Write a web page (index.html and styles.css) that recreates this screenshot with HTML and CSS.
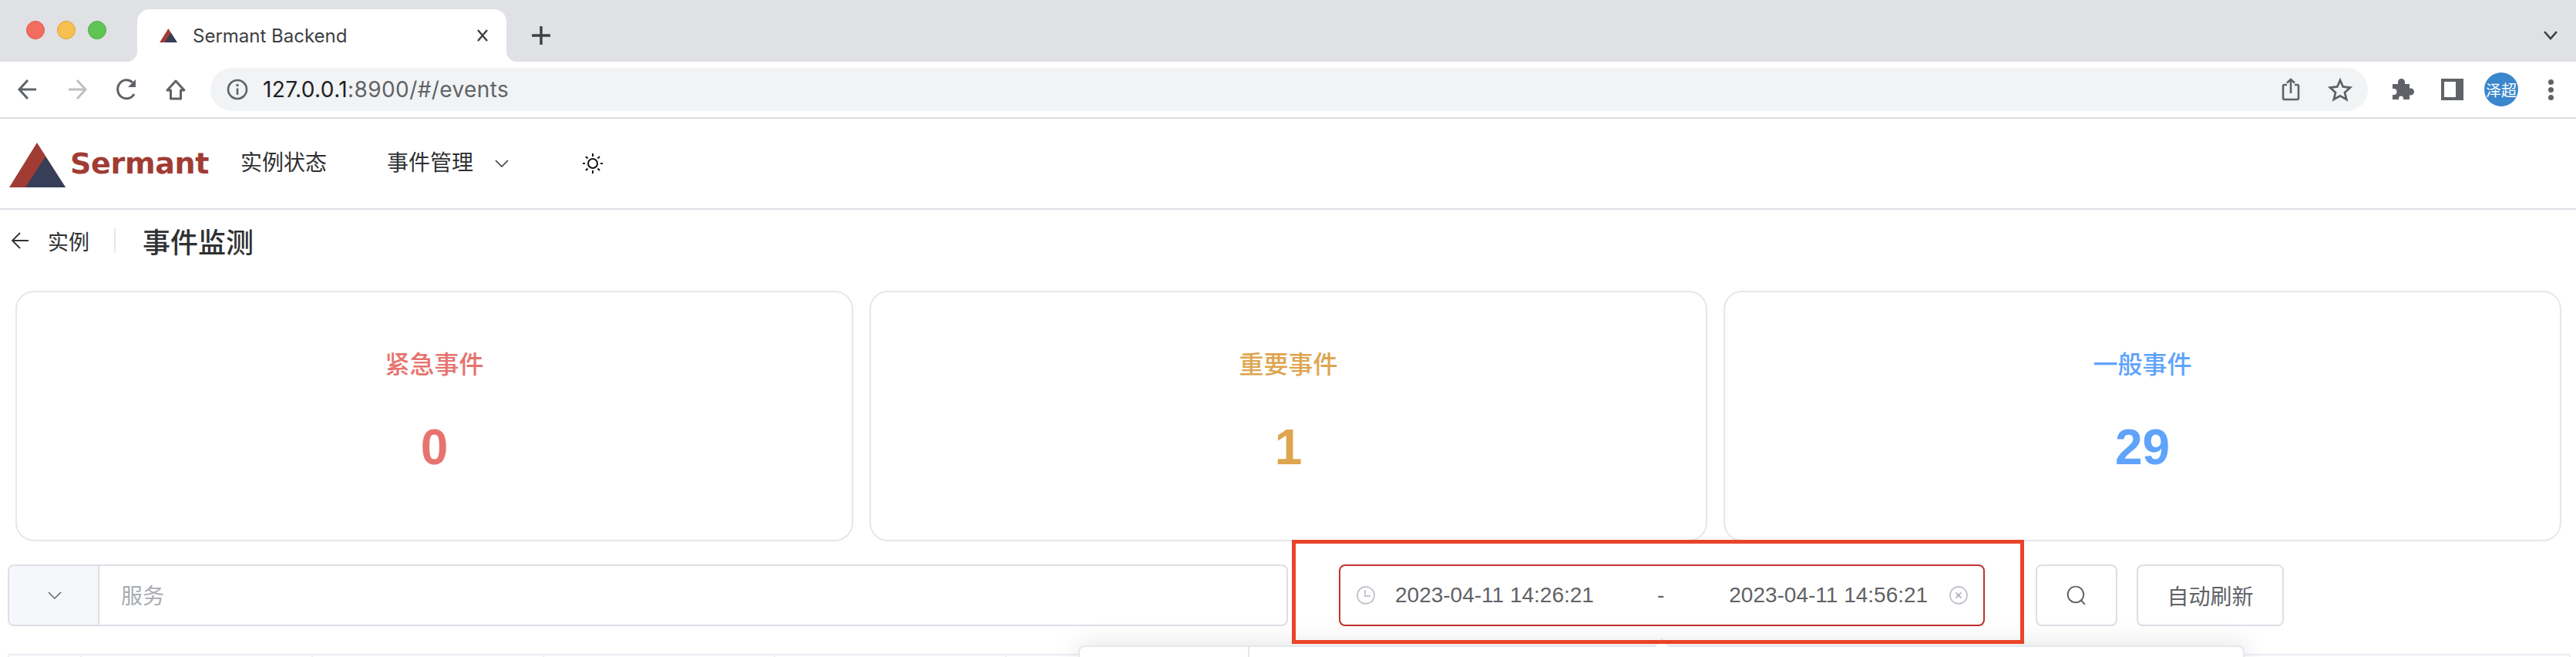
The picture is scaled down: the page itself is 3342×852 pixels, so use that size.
FILE: index.html
```html
<!DOCTYPE html>
<html lang="en">
<head>
    <meta charset="UTF-8">
    <meta name="viewport" content="width=device-width, initial-scale=1.0">
    <title>Sermant Backend</title>
    <link rel="stylesheet" href="styles.css">
</head>
<body>
    <!-- Browser window chrome -->
    <div class="tabstrip">
        <div class="lights">
            <span class="light light-red"></span>
            <span class="light light-yellow"></span>
            <span class="light light-green"></span>
        </div>
        <div class="tab">
            <svg class="favicon" viewBox="0 0 73 58"><polygon points="36,0 0,58 73,58" fill="#a03c34"/><polygon points="47,18 73,58 21,58" fill="#363f57"/></svg>
            <span class="tab-title">Sermant Backend</span>
            <svg class="tab-close" viewBox="0 0 20 20"><path d="M4 3 L16 17 M16 3 L4 17" stroke="#3c4043" stroke-width="2.4" fill="none"/></svg>
        </div>
        <svg class="tab-new" viewBox="0 0 24 24"><path d="M12 1 V23 M1 12 H23" stroke="#3c4043" stroke-width="3.4" stroke-linecap="round" fill="none"/></svg>
        <svg class="tab-search" viewBox="0 0 20 14"><path d="M2 2 L10 11 L18 2" stroke="#3c4043" stroke-width="2.6" fill="none"/></svg>
    </div>

    <div class="toolbar">
        <div class="tool-group">
            <svg class="tool-icon" viewBox="0 0 40 40"><path d="M31 20 H11 M20 8 L9 20 L20 32" stroke="#5f6368" stroke-width="3" fill="none"/></svg>
            <svg class="tool-icon" viewBox="0 0 40 40"><path d="M9 20 H29 M20 8 L31 20 L20 32" stroke="#bdc1c6" stroke-width="3" fill="none"/></svg>
            <svg class="tool-icon" viewBox="0 0 40 40"><path d="M30 26 A11.5 12 0 1 1 28 11" stroke="#5f6368" stroke-width="3" fill="none"/><polygon points="32,7 32,17 22,17" fill="#5f6368"/></svg>
            <svg class="tool-icon" viewBox="0 0 40 40"><path d="M20 9 L31 21 H26.500 V32 H13.500 V21 H9 Z" stroke="#5f6368" stroke-width="3" stroke-linejoin="round" fill="none"/></svg>
        </div>
        <div class="omnibox">
            <svg class="info-icon" viewBox="0 0 28 28"><circle cx="14" cy="14" r="12" stroke="#5f6368" stroke-width="2.600" fill="none"/><path d="M14 12.500 V21" stroke="#5f6368" stroke-width="2.600"/><circle cx="14" cy="8.500" r="1.700" fill="#5f6368"/></svg>
            <span class="url"><span class="url-host">127.0.0.1</span>:8900/#/events</span>
            <div class="omni-actions">
                <svg class="tool-icon" viewBox="0 0 40 40"><path d="M15 14 H11.500 Q10 14 10 15.500 V31 Q10 33 12 33 H28 Q30 33 30 31 V15.500 Q30 14 28.500 14 H25 M20 25 V7 M15 11.500 L20 7 L25 11.500" stroke="#5f6368" stroke-width="2.600" fill="none"/></svg>
                <svg class="tool-icon" viewBox="0 0 40 40"><polygon points="20,8 23.700,16.500 33,17.500 26,24 28.200,33 20,28.300 11.800,33 14,24 7,17.500 16.300,16.500" stroke="#5f6368" stroke-width="2.800" fill="none"/></svg>
            </div>
        </div>
        <div class="tool-group tool-group-right">
            <svg class="tool-icon" viewBox="0 0 40 40"><path d="M7 13 H14 V10.500 A4.500 4.500 0 0 1 23 10.500 V13 H29 V18.500 H30.500 A4.500 4.500 0 0 1 30.500 27.500 H29 V33 H21 V31.500 A3 3 0 0 0 15 31.500 V33 H7 V27 H8.500 A4 4 0 0 0 8.500 19 H7 Z" fill="#5f6368"/></svg>
            <div class="tool-cell"><span class="side-panel"></span></div>
            <div class="tool-cell"><span class="avatar">泽超</span></div>
            <div class="tool-cell"><span class="menu-dots"><i></i><i></i><i></i></span></div>
        </div>
    </div>

    <!-- App header -->
    <header class="app-nav">
        <svg class="logo-mark" viewBox="0 0 73 58"><polygon points="36,0 0,58 73,58" fill="#a03c34"/><polygon points="47,18 73,58 21,58" fill="#363f57"/></svg>
        <span class="logo-text">Sermant</span>
        <a class="nav-item nav-first">实例状态</a>
        <a class="nav-item nav-second">事件管理</a>
        <svg class="chevron nav-chevron" viewBox="0 0 20 12"><path d="M2 2 L10 10 L18 2" stroke="#303133" stroke-width="1.500" fill="none"/></svg>
        <svg class="sun" viewBox="0 0 28 28"><circle cx="14" cy="14" r="6" stroke="#111" stroke-width="2" fill="none"/><path d="M14 1 V5 M14 23 V27 M1 14 H4 M24 14 H27 M5 5 L7.500 7.500 M20.500 20.500 L23 23 M23 5 L20.500 7.500 M7.500 20.500 L5 23" stroke="#111" stroke-width="2" fill="none"/></svg>
    </header>

    <div class="page-head">
        <svg class="back-arrow" viewBox="0 0 24 24"><path d="M23 12 H2 M12 2 L2 12 L12 22" stroke="#303133" stroke-width="1.800" fill="none"/></svg>
        <span class="back-label">实例</span>
        <span class="head-divider"></span>
        <h1 class="head-title">事件监测</h1>
    </div>

    <div class="cards">
        <div class="card card-danger">
            <div class="card-label">紧急事件</div>
            <div class="card-value">0</div>
        </div>
        <div class="card card-warning">
            <div class="card-label">重要事件</div>
            <div class="card-value">1</div>
        </div>
        <div class="card card-info">
            <div class="card-label">一般事件</div>
            <div class="card-value">29</div>
        </div>
    </div>

    <div class="filters">
        <div class="input-group">
            <div class="input-prepend">
                <svg class="chevron" viewBox="0 0 20 12"><path d="M2 2 L10 10 L18 2" stroke="#606266" stroke-width="1.500" fill="none"/></svg>
            </div>
            <div class="input-field">服务</div>
        </div>
        <div class="date-range">
            <svg class="range-icon" viewBox="0 0 24 24"><circle cx="12" cy="12" r="11" stroke="#c0c4cc" stroke-width="1.800" fill="none"/><path d="M11 5 V13 H18" stroke="#c0c4cc" stroke-width="1.800" fill="none"/></svg>
            <span class="range-start">2023-04-11 14:26:21</span>
            <span class="range-sep">-</span>
            <span class="range-end">2023-04-11 14:56:21</span>
            <svg class="range-icon range-clear" viewBox="0 0 24 24"><circle cx="12" cy="12" r="11" stroke="#c0c4cc" stroke-width="1.800" fill="none"/><path d="M8.500 8.500 L15.500 15.500 M15.500 8.500 L8.500 15.500" stroke="#a8abb2" stroke-width="1.600" fill="none"/></svg>
        </div>
        <button class="btn btn-search" type="button">
            <svg class="search-icon" viewBox="0 0 24 24"><circle cx="11" cy="11" r="9.500" stroke="#606266" stroke-width="1.800" fill="none"/><path d="M17.500 18 L22 23" stroke="#606266" stroke-width="1.800" fill="none"/></svg>
        </button>
        <button class="btn btn-refresh" type="button">自动刷新</button>
    </div>

    <div class="table-head">
        <div class="col col-first"></div>
        <div class="col"></div>
        <div class="col"></div>
        <div class="col"></div>
        <div class="col"></div>
        <div class="col col-last"></div>
    </div>

    <!-- Date picker opens over the table -->
    <div class="picker">
        <div class="picker-sidebar"></div>
    </div>
    <div class="picker-arrow"></div>

    <!-- Red box drawn over the screenshot -->
    <div class="highlight"></div>
</body>
</html>
```

FILE: styles.css
```css
html, body {
    margin: 0;
    height: 852px;
    overflow: hidden;
    background: #fff;
}
body {
    position: relative;
    font-family: "Liberation Sans", "Noto Sans CJK SC", sans-serif;
    color: #303133;
}

/* browser chrome */
.tabstrip {
    display: flex;
    height: 80px;
    padding-left: 34px;
    background: #dfe1e5;
}
.lights {
    display: flex;
    gap: 16px;
    width: 144px;
    margin-top: 27px;
}
.light {
    width: 24px;
    height: 24px;
    border-radius: 50%;
    box-sizing: border-box;
}
.light-red {
    background: #f36c60;
    border: 1px solid #e0574c;
}
.light-yellow {
    background: #f6bf4f;
    border: 1px solid #dfa336;
}
.light-green {
    background: #5fc454;
    border: 1px solid #4dae43;
}
.tab {
    position: relative;
    display: flex;
    align-items: center;
    width: 479px;
    height: 68px;
    margin-top: 12px;
    padding-left: 29px;
    box-sizing: border-box;
    background: #fff;
    border-radius: 16px 16px 0 0;
}
.tab::before,
.tab::after {
    content: "";
    position: absolute;
    bottom: 0;
    width: 14px;
    height: 14px;
}
.tab::before {
    left: -14px;
    background: radial-gradient(circle at 0 0, #dfe1e5 14px, #fff 14.500px);
}
.tab::after {
    right: -14px;
    background: radial-gradient(circle at 100% 0, #dfe1e5 14px, #fff 14.500px);
}
.favicon {
    width: 23px;
    height: 18px;
}
.tab-title {
    margin-left: 20px;
    font-family: Inter, sans-serif;
    font-size: 24px;
    color: #3c4043;
    white-space: nowrap;
}
.tab-close {
    width: 20px;
    height: 20px;
    margin-left: auto;
    margin-right: 21px;
}
.tab-new {
    width: 24px;
    height: 24px;
    margin-top: 34px;
    margin-left: 33px;
}
.tab-search {
    width: 20px;
    height: 14px;
    margin-top: 39px;
    margin-left: auto;
    margin-right: 23px;
}
.toolbar {
    display: flex;
    align-items: center;
    height: 72px;
    background: #fff;
    border-bottom: 2px solid #dcdcdc;
}
.tool-group {
    display: flex;
    align-items: center;
    gap: 24px;
    padding-left: 16px;
}
.tool-group-right {
    padding-left: 25px;
    padding-right: 13px;
}
.tool-icon {
    width: 40px;
    height: 40px;
    flex: none;
}
.tool-cell {
    display: flex;
    align-items: center;
    justify-content: center;
    width: 40px;
    height: 44px;
}
.omnibox {
    display: flex;
    align-items: center;
    flex: 1;
    height: 56px;
    margin-left: 25px;
    padding: 0 16px 0 21px;
    background: #f1f3f4;
    border-radius: 28px;
}
.info-icon {
    width: 28px;
    height: 28px;
}
.url {
    margin-left: 19px;
    font-family: Inter, sans-serif;
    font-size: 28px;
    letter-spacing: 0.400px;
    color: #5f6368;
}
.url-host {
    color: #202124;
}
.omni-actions {
    display: flex;
    gap: 24px;
    margin-left: auto;
}
.side-panel {
    display: block;
    width: 29px;
    height: 28px;
    box-sizing: border-box;
    border: solid #5f6368;
    border-width: 4px 10px 4px 4px;
    background: #fff;
}
.avatar {
    display: flex;
    align-items: center;
    justify-content: center;
    flex: none;
    width: 44px;
    height: 44px;
    border-radius: 50%;
    background: #3b87cd;
    color: #fff;
    font-size: 20px;
    white-space: nowrap;
}
.menu-dots {
    display: flex;
    flex-direction: column;
    gap: 3px;
}
.menu-dots i {
    display: block;
    width: 7px;
    height: 7px;
    border-radius: 50%;
    background: #5f6368;
}

/* app header */
.app-nav {
    display: flex;
    align-items: center;
    height: 116px;
    padding-left: 12px;
    border-bottom: 2px solid #dcdfe6;
}
.logo-mark {
    width: 73px;
    height: 58px;
    margin-top: 4px;
}
.logo-text {
    width: 179px;
    margin-left: 6px;
    font-family: "DejaVu Sans", sans-serif;
    font-size: 38px;
    font-weight: bold;
    color: #a03c34;
    letter-spacing: -0.300px;
    white-space: nowrap;
}
.nav-item {
    font-size: 28px;
    line-height: 40px;
    color: #303133;
}
.nav-first {
    margin-left: 42px;
}
.nav-second {
    margin-left: 78px;
}
.chevron {
    width: 20px;
    height: 12px;
}
.nav-chevron {
    margin-left: 27px;
}
.sun {
    width: 28px;
    height: 28px;
    margin-left: 94px;
}

/* page head */
.page-head {
    display: flex;
    align-items: center;
    height: 80px;
    padding-left: 14px;
}
.back-arrow {
    width: 24px;
    height: 24px;
}
.back-label {
    margin-left: 24px;
    font-size: 27px;
}
.head-divider {
    width: 2px;
    height: 32px;
    margin-left: 32px;
    background: #e4e7ed;
}
.head-title {
    margin: 0 0 0 35px;
    font-size: 36px;
    font-weight: 500;
    color: #303133;
}

/* summary cards */
.cards {
    display: grid;
    grid-template-columns: repeat(3, 1fr);
    gap: 21px;
    margin: 25px 19px 0 20px;
}
.card {
    height: 325px;
    box-sizing: border-box;
    padding-top: 74px;
    border: 2px solid #e4e7ed;
    border-radius: 24px;
    text-align: center;
}
.card-label {
    font-size: 32px;
    font-weight: 500;
    line-height: 40px;
}
.card-value {
    margin-top: 51px;
    font-size: 64px;
    font-weight: bold;
    line-height: 72px;
}
.card-danger {
    color: #e6736f;
}
.card-warning {
    color: #dea54f;
}
.card-info {
    color: #5fa3fb;
}

/* filter row */
.filters {
    display: flex;
    margin: 30px 0 0 10px;
    height: 80px;
}
.input-group {
    display: flex;
    width: 1661px;
    box-sizing: border-box;
    border: 2px solid #dcdfe6;
    border-radius: 8px;
}
.input-prepend {
    display: flex;
    align-items: center;
    justify-content: center;
    width: 117px;
    padding-left: 2px;
    box-sizing: border-box;
    background: #f5f7fa;
    border-right: 2px solid #dcdfe6;
    border-radius: 6px 0 0 6px;
}
.input-field {
    display: flex;
    align-items: center;
    height: 74px;
    padding-left: 28px;
    font-size: 28px;
    color: #a8abb2;
}
.date-range {
    display: flex;
    align-items: center;
    width: 838px;
    margin-left: 66px;
    box-sizing: border-box;
    padding: 0 20px 0 21px;
    border: 2px solid #c0322b;
    border-radius: 8px;
    font-size: 28px;
    color: #606266;
    white-space: nowrap;
}
.range-icon {
    width: 24px;
    height: 24px;
    flex: none;
}
.range-start {
    margin-left: 26px;
}
.range-sep {
    margin-left: 82px;
}
.range-end {
    margin-left: 84px;
}
.range-clear {
    margin-left: auto;
}
.btn {
    display: flex;
    align-items: center;
    justify-content: center;
    padding: 0;
    background: #fff;
    border: 2px solid #dcdfe6;
    border-radius: 8px;
    font-family: inherit;
    font-size: 28px;
    color: #606266;
}
.btn-search {
    width: 106px;
    margin-left: 66px;
}
.btn-refresh {
    width: 191px;
    margin-left: 25px;
}
.search-icon {
    width: 26px;
    height: 26px;
}

/* table, only its top edge is in view */
.table-head {
    display: flex;
    height: 10px;
    margin: 36px 7px 0 10px;
    border-top: 2px solid #ebeef5;
}
.col {
    width: 300px;
    box-sizing: border-box;
    border-left: 2px solid #ebeef5;
}
.col-first {
    width: 94px;
}
.col-last {
    flex: 1;
    border-right: 2px solid #ebeef5;
}

/* overlays */
.picker {
    position: absolute;
    left: 1399px;
    top: 837px;
    width: 1513px;
    height: 40px;
    box-sizing: border-box;
    background: #fff;
    border: 2px solid #e4e7ed;
    border-radius: 8px 8px 0 0;
    box-shadow: 0 0 36px rgba(0, 0, 0, 0.12);
}
.picker-sidebar {
    width: 218px;
    height: 100%;
    border-right: 2px solid #e4e7ed;
}
.picker-arrow {
    position: absolute;
    left: 2148px;
    top: 830px;
    width: 16px;
    height: 16px;
    box-sizing: border-box;
    background: linear-gradient(135deg, #fff 50%, transparent 50%);
    border-top: 2px solid #e4e7ed;
    border-left: 2px solid #e4e7ed;
    transform: rotate(45deg);
}
.highlight {
    position: absolute;
    left: 1676px;
    top: 700px;
    width: 950px;
    height: 135px;
    box-sizing: border-box;
    border: 5px solid #e8442a;
}
```
